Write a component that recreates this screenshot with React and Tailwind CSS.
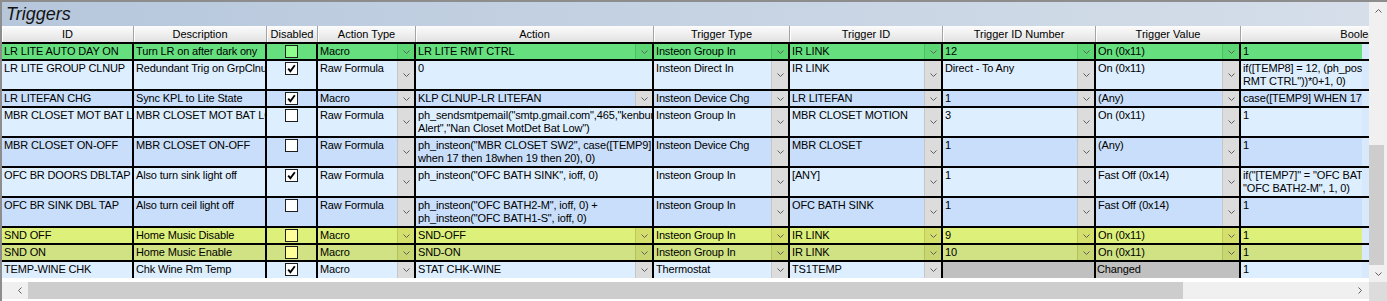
import React from 'react';

const cols = [
  { label: 'ID', w: 'w-[132px]' },
  { label: 'Description', w: 'w-[133px]' },
  { label: 'Disabled', w: 'w-[51px]' },
  { label: 'Action Type', w: 'w-[98px]' },
  { label: 'Action', w: 'w-[238px]' },
  { label: 'Trigger Type', w: 'w-[136px]' },
  { label: 'Trigger ID', w: 'w-[153px]' },
  { label: 'Trigger ID Number', w: 'w-[153px]' },
  { label: 'Trigger Value', w: 'w-[145px]' },
  { label: 'Boolean', w: 'w-[240px]' },
];

const tones = {
  green: { row: 'bg-[#66e07e]', btn: 'bg-[#5dd674] border-[#4fbf65]', box: 'bg-[#8cff8c]' },
  light: { row: 'bg-[#ddeeff]', btn: 'bg-[#dcdcdc] border-[#c6c6c6]', box: 'bg-white' },
  dark: { row: 'bg-[#c8defa]', btn: 'bg-[#dcdcdc] border-[#c6c6c6]', box: 'bg-white' },
  yel1: { row: 'bg-[#ddf07a]', btn: 'bg-[#d5e06c] border-[#bcc85a]', box: 'bg-[#ffff99]' },
  yel2: { row: 'bg-[#d0e283]', btn: 'bg-[#c9d772] border-[#b3c060]', box: 'bg-[#ffff99]' },
};

const rows = [
  {
    tone: 'green', h: 'h-[17px] border-b-2', id: 'LR LITE AUTO DAY ON', desc: 'Turn LR on after dark ony', dis: false,
    at: 'Macro', act: 'LR LITE RMT CTRL', actBtn: true, tt: 'Insteon Group In', tid: 'IR LINK', tin: '12', tv: 'On (0x11)', bool: '1',
  },
  {
    tone: 'light', h: 'h-[30px] border-b-2', id: 'LR LITE GROUP CLNUP', desc: 'Redundant Trig on GrpClnup', dis: true,
    at: 'Raw Formula', act: '0', actBtn: false, tt: 'Insteon Direct In', tid: 'IR LINK', tin: 'Direct - To Any', tv: 'On (0x11)',
    bool: 'if([TEMP8] = 12, (ph_postevent("LR LITE\nRMT CTRL"))*0+1, 0)',
  },
  {
    tone: 'dark', h: 'h-[17px] border-b-2', id: 'LR LITEFAN CHG', desc: 'Sync KPL to Lite State', dis: true,
    at: 'Macro', act: 'KLP CLNUP-LR LITEFAN', actBtn: true, tt: 'Insteon Device Chg', tid: 'LR LITEFAN', tin: '1', tv: '(Any)',
    bool: 'case([TEMP9] WHEN 17 to 18 WHEN 19 to 20)',
  },
  {
    tone: 'light', h: 'h-[30px] border-b-2', id: 'MBR CLOSET MOT BAT LOW', desc: 'MBR CLOSET MOT BAT LOW', dis: false,
    at: 'Raw Formula', act: 'ph_sendsmtpemail("smtp.gmail.com",465,"kenburke",\nAlert","Nan Closet MotDet Bat Low")', actBtn: false,
    tt: 'Insteon Group In', tid: 'MBR CLOSET MOTION', tin: '3', tv: 'On (0x11)', bool: '1',
  },
  {
    tone: 'dark', h: 'h-[30px] border-b-2', id: 'MBR CLOSET ON-OFF', desc: 'MBR CLOSET ON-OFF', dis: false,
    at: 'Raw Formula', act: 'ph_insteon("MBR CLOSET SW2", case([TEMP9]\nwhen 17 then 18when 19 then 20), 0)', actBtn: false,
    tt: 'Insteon Device Chg', tid: 'MBR CLOSET', tin: '1', tv: '(Any)', bool: '1',
  },
  {
    tone: 'light', h: 'h-[30px] border-b-2', id: 'OFC BR DOORS DBLTAP', desc: 'Also turn sink light off', dis: true,
    at: 'Raw Formula', act: 'ph_insteon("OFC BATH SINK", ioff, 0)', actBtn: false,
    tt: 'Insteon Group In', tid: '[ANY]', tin: '1', tv: 'Fast Off (0x14)',
    bool: 'if("[TEMP7]" = "OFC BATH1-S" or "[TEMP7]" =\n"OFC BATH2-M", 1, 0)',
  },
  {
    tone: 'dark', h: 'h-[30px] border-b-2', id: 'OFC BR SINK DBL TAP', desc: 'Also turn ceil light off', dis: false,
    at: 'Raw Formula', act: 'ph_insteon("OFC BATH2-M", ioff, 0) +\nph_insteon("OFC BATH1-S", ioff, 0)', actBtn: false,
    tt: 'Insteon Group In', tid: 'OFC BATH SINK', tin: '1', tv: 'Fast Off (0x14)', bool: '1',
  },
  {
    tone: 'yel1', h: 'h-[17px] border-b-2', id: 'SND OFF', desc: 'Home Music Disable', dis: false,
    at: 'Macro', act: 'SND-OFF', actBtn: true, tt: 'Insteon Group In', tid: 'IR LINK', tin: '9', tv: 'On (0x11)', bool: '1',
  },
  {
    tone: 'yel2', h: 'h-[17px] border-b-2', id: 'SND ON', desc: 'Home Music Enable', dis: false,
    at: 'Macro', act: 'SND-ON', actBtn: true, tt: 'Insteon Group In', tid: 'IR LINK', tin: '10', tv: 'On (0x11)', bool: '1',
  },
  {
    tone: 'light', h: 'h-[16px]', id: 'TEMP-WINE CHK', desc: 'Chk Wine Rm Temp', dis: true,
    at: 'Macro', act: 'STAT CHK-WINE', actBtn: true, tt: 'Thermostat', tid: 'TS1TEMP', tin: '', tv: 'Changed', bool: '1', gray: true,
  },
];

const Chevron = ({ dir = 'down' }) => {
  const d = {
    down: 'M0.5 0.5 L3.5 3.5 L6.5 0.5',
    up: 'M0.5 3.5 L3.5 0.5 L6.5 3.5',
  }[dir];
  return (
    <svg width="7" height="4" viewBox="0 0 7 4" className="block">
      <path d={d} fill="none" stroke="#606060" strokeWidth="1" />
    </svg>
  );
};

const SideChevron = ({ dir }) => (
  <svg width="4" height="7" viewBox="0 0 4 7" className="block">
    <path d={dir === 'left' ? 'M3.5 0.5 L0.5 3.5 L3.5 6.5' : 'M0.5 0.5 L3.5 3.5 L0.5 6.5'} fill="none" stroke="#606060" strokeWidth="1" />
  </svg>
);

const Txt = ({ w, text, last, cls = '' }) => (
  <div className={`${w} shrink-0 overflow-hidden whitespace-pre pl-[2px] pt-[1px] leading-[13px] tracking-[-0.15px] ${last ? '' : 'border-r-2 border-black'} ${cls}`}>
    {text}
  </div>
);

const Combo = ({ w, text, btn, t }) => (
  <div className={`${w} shrink-0 flex border-r-2 border-black`}>
    <div className="flex-1 min-w-0 overflow-hidden whitespace-pre pl-[2px] pt-[1px] leading-[13px] tracking-[-0.15px]">{text}</div>
    {btn && (
      <div className={`w-[17px] shrink-0 flex items-center justify-center border-l ${t.btn}`}>
        <Chevron />
      </div>
    )}
  </div>
);

const Check = ({ checked, t }) => (
  <div className="w-[51px] shrink-0 flex justify-center pt-[1px] border-r-2 border-black">
    <div className={`w-[13px] h-[13px] border border-[#1e1e1e] flex items-center justify-center ${t.box}`}>
      {checked && (
        <svg width="11" height="11" viewBox="0 0 11 11" className="block">
          <path d="M2.2 5.6 L4.4 8.2 L8.8 2.2" fill="none" stroke="#000" strokeWidth="1.9" />
        </svg>
      )}
    </div>
  </div>
);

const Row = ({ r }) => {
  const t = tones[r.tone];
  return (
    <div className={`flex border-black ${r.h}`}>
      <div className={`flex w-[1360px] shrink-0 overflow-hidden ${t.row}`}>
        <Txt w="w-[132px]" text={r.id} />
        <Txt w="w-[133px]" text={r.desc} />
        <Check checked={r.dis} t={t} />
        <Combo w="w-[98px]" text={r.at} btn t={t} />
        <Combo w="w-[238px]" text={r.act} btn={r.actBtn} t={t} />
        <Combo w="w-[136px]" text={r.tt} btn t={t} />
        <Combo w="w-[153px]" text={r.tid} btn t={t} />
        {r.gray ? (
          <>
            <Txt w="w-[153px]" text="" cls="bg-[#c0c0c0]" />
            <Txt w="w-[145px]" text={r.tv} cls="bg-[#c0c0c0] !pl-[1px]" />
          </>
        ) : (
          <>
            <Combo w="w-[153px]" text={r.tin} btn t={t} />
            <Combo w="w-[145px]" text={r.tv} btn t={t} />
          </>
        )}
        <Txt w="w-[240px]" text={r.bool} last />
      </div>
      <div className="flex-1 bg-[#d9e9fc]" />
    </div>
  );
};

export default function App() {
  return (
    <div className="w-[1387px] h-[301px] overflow-hidden border-t-2 border-l-2 border-[#8d8d8d] bg-white text-[11px] text-black font-['Liberation_Sans',Arial,sans-serif] flex flex-col">
      <div className="flex h-[280px] shrink-0">
        <div className="w-[1367px] shrink-0 flex flex-col overflow-hidden">
          <div className="h-[24px] shrink-0 flex items-center pl-[4px] bg-gradient-to-r from-[#b6c7dc] to-[#d5dee9]">
            <span className="text-[18px] italic text-[#141414] leading-[21px]">Triggers</span>
          </div>
          <div className="flex h-[18px] shrink-0 border-b-2 border-black bg-gradient-to-b from-[#fcfcfc] to-[#e2e2e2]">
            {cols.map((c) => (
              <div
                key={c.label}
                className={`${c.w} shrink-0 flex items-center justify-center whitespace-nowrap border-r border-[#a4a4a4] shadow-[inset_1px_0_0_#ffffff]`}
              >
                {c.label}
              </div>
            ))}
          </div>
          {rows.map((r) => (
            <Row key={r.id} r={r} />
          ))}
          <div className="flex-1 bg-white" />
        </div>
        <div className="w-[18px] shrink-0 flex flex-col bg-[#f0f0f0]">
          <div className="h-[17px] shrink-0 flex items-center justify-center">
            <Chevron dir="up" />
          </div>
          <div className="h-[126px] shrink-0" />
          <div className="h-[120px] w-[15px] shrink-0 bg-[#cdcdcd]" />
          <div className="h-[17px] shrink-0 flex items-center justify-center">
            <Chevron dir="down" />
          </div>
        </div>
      </div>
      <div className="flex h-[19px] shrink-0">
        <div className="w-[1367px] shrink-0 h-[17px] flex bg-[#f0f0f0]">
          <div className="w-[26px] shrink-0 flex items-center pl-[16px]">
            <SideChevron dir="left" />
          </div>
          <div className="w-[1155px] shrink-0 bg-[#cdcdcd]" />
          <div className="flex-1 flex items-center justify-end pr-[7px]">
            <SideChevron dir="right" />
          </div>
        </div>
        <div className="flex-1 bg-[#dcdcdc]" />
      </div>
    </div>
  );
}
